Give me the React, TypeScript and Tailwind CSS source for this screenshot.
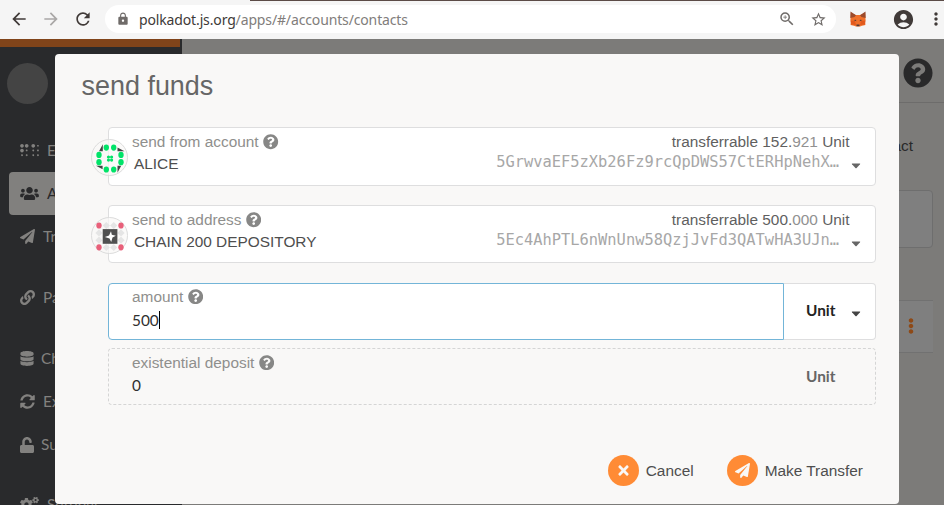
import type { ReactNode } from 'react';
import {
  FaBraille, FaUsers, FaPaperPlane, FaLink, FaDatabase, FaSyncAlt, FaUnlock, FaCogs,
  FaQuestionCircle, FaTimes, FaEllipsisV,
} from 'react-icons/fa';
import {
  MdArrowBack, MdArrowForward, MdRefresh, MdLock, MdZoomIn, MdStarBorder, MdAccountCircle, MdMoreVert,
} from 'react-icons/md';

function Fox() {
  return (
    <svg viewBox="0 0 18 16" className="h-4 w-[18px]">
      <path fill="#f0702a" d="M2 2 6.800 4h4.400L16 2l.6 7-.6 2 .4 3-3.400.800-2 .800H7l-2-.800-3.400-.800.400-3-.600-2z" />
      <path fill="#9c4a2b" d="M1.500.5 7 4.200 5.500 6 1.300 7zM16.500.5 11 4.200 12.500 6l4.200 1z" />
      <path fill="#e2591c" d="M1.500 9.500 6 10l1 4-5-.5zM16.500 9.500 12 10l-1 4 5-.5z" />
      <path fill="#543a34" d="m4.500 9 2.500-.3.300 1.600zM13.500 9l-2.500-.3-.3 1.600zM7.500 13.500h3v1.800h-3z" />
    </svg>
  );
}

function BrowserBar() {
  return (
    <header className="relative flex h-[39px] shrink-0 items-center bg-[#f5f5f5] pb-px">
      <div className="absolute top-0 right-0 h-px w-[694px] bg-[#5b4b47]" />
      <MdArrowBack className="ml-[9px] h-5 w-5 shrink-0 text-[#403a38]" />
      <MdArrowForward className="ml-3 h-5 w-5 shrink-0 text-[#a9a7a6]" />
      <MdRefresh className="ml-3 h-5 w-5 shrink-0 text-[#403a38]" />
      <div className="ml-3 flex h-7 w-[731px] shrink-0 items-center rounded-full bg-white">
        <MdLock className="ml-[11px] h-[14px] w-[14px] shrink-0 text-[#6f6b69]" />
        <span className="ml-[9px] grow font-['Noto_Sans',sans-serif] text-[14px] tracking-[-0.14px] text-[#817d7b]">
          <span className="text-[#403a38]">polkadot.js.org</span>/apps/#/accounts/contacts
        </span>
        <MdZoomIn className="mr-[14px] h-[18px] w-[18px] shrink-0 text-[#6f6b69]" />
        <MdStarBorder className="mr-[9px] h-[17px] w-[17px] shrink-0 text-[#6f6b69]" />
      </div>
      <div className="ml-[13px]"><Fox /></div>
      <MdAccountCircle className="ml-[25px] h-[23px] w-[23px] shrink-0 text-[#403a38]" />
      <MdMoreVert className="ml-[11px] h-5 w-5 shrink-0 text-[#403a38]" />
    </header>
  );
}

function NavItem({ icon, children, className = '' }: { icon: ReactNode; children: ReactNode; className?: string }) {
  return (
    <div className={`ml-[9px] flex h-[43px] w-[173px] shrink-0 items-center rounded-[4px] pl-[11px] font-[Lato,sans-serif] text-[15.4px] whitespace-nowrap ${className}`}>
      {icon}
      <span>{children}</span>
    </div>
  );
}

function Sidebar() {
  return (
    <aside className="flex w-[182px] shrink-0 flex-col overflow-hidden bg-[#292a2c] text-[#82817f]">
      <div className="h-2 w-[180px] shrink-0 bg-[#80441a]" />
      <div className="mt-4 mb-[25px] ml-[7px] h-[41px] w-[41px] shrink-0 rounded-full bg-[#444]" />
      <NavItem icon={<FaBraille className="mr-[8px] h-[15px] w-[19px]" />}>Explorer</NavItem>
      <NavItem className="bg-[#81807e] text-[#29292b]" icon={<FaUsers className="mr-[8px] h-[15px] w-[19px]" />}>Accounts</NavItem>
      <NavItem icon={<FaPaperPlane className="mr-[8px] h-[15px] w-[15px]" />}>Transfer</NavItem>
      <NavItem className="mt-[18px]" icon={<FaLink className="mr-[8px] h-[15px] w-[15px]" />}>Parachains</NavItem>
      <NavItem className="mt-[18px]" icon={<FaDatabase className="mr-[7px] h-[15px] w-[14px]" />}>Chain state</NavItem>
      <NavItem icon={<FaSyncAlt className="mr-[8px] h-[15px] w-[15px]" />}>Extrinsics</NavItem>
      <NavItem icon={<FaUnlock className="mr-[7px] h-4 w-[14px]" />}>Sudo</NavItem>
      <NavItem className="mt-[17px]" icon={<FaCogs className="mr-[8px] h-[15px] w-[19px]" />}>Settings</NavItem>
    </aside>
  );
}

function PageContent() {
  return (
    <main className="flex grow flex-col items-end bg-[#7c7b79] font-['Liberation_Sans',sans-serif]">
      <div className="flex h-16 w-full justify-end border-b border-[#6d6c6b] pt-[19px] pr-[11px]">
        <FaQuestionCircle className="h-[30px] w-[30px] text-[#29292a]" />
      </div>
      <div className="mt-[33px] mr-[31px] text-[15.4px] leading-5 text-[#29292a]">Add contact</div>
      <div className="mt-[34px] mr-[11px] h-[58px] w-[730px] rounded-[4px] border border-[#6e6e6e] bg-[#7f7f7f]" />
      <div className="mt-[52px] mr-[11px] flex h-[53px] w-[730px] items-center justify-end border-y border-[#717171] bg-[#7f7f7f] pr-[14px]">
        <FaEllipsisV className="mb-[2px] h-[16px] w-[16px] text-[#8e4916]" />
      </div>
    </main>
  );
}

const corners: [number, number][] = [[7, 7.500], [29, 7.500], [7, 29.300], [29, 29.300]];
const edges: [number, number][] = [[14.300, 7.600], [21.700, 7.600], [7, 14.900], [29, 14.900], [7, 22.200], [29, 22.200], [14.300, 29.500], [21.700, 29.500]];

function AliceIcon() {
  return (
    <svg viewBox="0 0 37 37" className="h-[37px] w-[37px]">
      <g fill="#444">
        <path d="M7 11.300 10.800 4.200V11.300zM25.500 7.600l7 3.700h-7zM4 25.700H10.600v3.600zM25.500 25.700H29.200l-3.700 7z" />
      </g>
      <g fill="#00e368">
        {edges.map(([x, y], i) => <ellipse key={i} cx={x} cy={y} rx="2.7" ry="3.1" />)}
        <circle cx="16.500" cy="17" r="1.600" /><circle cx="19.600" cy="17" r="1.600" />
        <circle cx="16.500" cy="20.100" r="1.600" /><circle cx="19.600" cy="20.100" r="1.600" />
      </g>
    </svg>
  );
}

function DepositoryIcon() {
  return (
    <svg viewBox="0 0 37 37" className="h-[37px] w-[37px]">
      {edges.map(([x, y], i) => <path key={i} d={`M${x} ${y - 3.6}l3.600 3.600-3.600 3.600-3.600-3.600z`} fill="#e5e5e5" />)}
      {corners.map(([x, y], i) => <ellipse key={i} cx={x} cy={y} rx="2.700" ry="3.100" fill="#e8607a" />)}
      <path fill="#505050" d="M10.700 11.100H25.400v14.700H10.700z" />
      <path fill="#fff" d="M19 13.200l.8 3.500 4 1.100-3.300 1.700-1.300 4.400-1.700-3.500-4.600-1.300 4.100-1.700z" />
    </svg>
  );
}

function Caret({ className }: { className: string }) {
  return (
    <svg viewBox="0 0 10 6" className={`h-[6px] w-[10px] shrink-0 ${className}`}>
      <path fill="currentColor" d="M1.300.500h7.400q.900 0 .300.700L5.600 4.900q-.6.600-1.200 0L1 1.200Q.400.500 1.300.500z" />
    </svg>
  );
}

function Label({ children }: { children: ReactNode }) {
  return (
    <div className="flex items-center gap-[4.500px] text-[15.4px] leading-5 text-[#8f8f8d]">
      {children}
      <FaQuestionCircle className="h-[15.4px] w-[15.4px] text-[#878786]" />
    </div>
  );
}

interface AccountProps { label: string; name: string; whole: string; fraction: string; address: string; icon: ReactNode; className: string }

function AccountField({ label, name, whole, fraction, address, icon, className }: AccountProps) {
  return (
    <section className={`relative flex justify-between rounded-[4px] border border-[#dededf] bg-white pt-1 pr-[14px] pl-[23px] ${className}`}>
      <div className="absolute top-[11px] -left-[18px] h-[37px] w-[37px] rounded-full border border-[#dcdcdc] bg-[#f9f8f7]/70">
        <div className="-mt-[0.5px] -ml-[0.5px]">{icon}</div>
      </div>
      <div>
        <Label>{label}</Label>
        <div className="mt-[2px] ml-[2px] text-[15.4px] leading-5 text-[#4e4e4e]">{name}</div>
      </div>
      <div>
        <div className="pr-[11.500px] text-right text-[15.4px] leading-5 tracking-[-0.01px] text-[#5f5f5f]">
          transferrable {whole}.<span className="text-[#919191]">{fraction}</span> Unit
        </div>
        <div className="mt-px flex items-center gap-3">
          <span className="font-['DejaVu_Sans_Mono',monospace] text-[15.4px] leading-[18px] text-[#a7a7a7]">{address}</span>
          <Caret className="mt-2 text-[#666]" />
        </div>
      </div>
    </section>
  );
}

function Action({ icon, children }: { icon: ReactNode; children: ReactNode }) {
  return (
    <button className="flex items-center gap-[6.500px] text-[15.4px] text-[#4e4e4e]">
      <span className="flex h-[31px] w-[31px] items-center justify-center rounded-full bg-[#ff8b35] text-[#f9f8f7]">{icon}</span>
      {children}
    </button>
  );
}

function TransferModal() {
  return (
    <div className="absolute top-[54px] left-[55px] flex h-[450px] w-[844px] flex-col rounded-[4px] bg-[#f9f8f7] font-['Liberation_Sans',sans-serif]">
      <h1 className="mt-4 ml-[26.500px] h-[57px] text-[26.950px] leading-8 text-[#666]">send funds</h1>
      <div className="mr-[23px] ml-[53px] flex flex-col">
        <AccountField className="h-[59px]" label="send from account" name="ALICE" whole="152" fraction="921" address="5GrwvaEF5zXb26Fz9rcQpDWS57CtERHpNehX…" icon={<AliceIcon />} />
        <AccountField className="mt-[19px] h-[58px]" label="send to address" name="CHAIN 200 DEPOSITORY" whole="500" fraction="000" address="5Ec4AhPTL6nWnUnw58QzjJvFd3QATwHA3UJn…" icon={<DepositoryIcon />} />
        <section className="mt-5 flex h-[57px]">
          <div className="w-[676px] rounded-l-[4px] border border-[#73b5d8] bg-white pt-[2.500px] pl-[23px]">
            <Label>amount</Label>
            <div className="mt-[3px] flex items-center font-[Lato,sans-serif] text-[15.4px] leading-5 text-[#303030]">
              500<span className="h-[18px] w-px bg-black" />
            </div>
          </div>
          <div className="flex grow items-center rounded-r-[4px] border border-l-0 border-[#dededf] bg-white pl-[22px] font-[Lato,sans-serif] text-[15.4px] font-bold text-[#232323]">
            <span className="-mt-[2px]">Unit</span>
            <Caret className="mt-[5px] ml-[15px] text-[#444]" />
          </div>
        </section>
        <section className="mt-2 flex h-[57px] justify-between rounded-[4px] border border-dashed border-[#d5d5d5] pt-[3.500px] pr-[39.500px] pl-[23px]">
          <div>
            <Label>existential deposit</Label>
            <div className="mt-[2px] font-[Lato,sans-serif] text-[15.4px] leading-5 text-[#303030]">0</div>
          </div>
          <span className="mt-[13px] font-[Lato,sans-serif] text-[15.4px] leading-5 font-bold text-[#666]">Unit</span>
        </section>
      </div>
      <footer className="mt-[50px] mr-9 flex justify-end gap-[33.500px]">
        <Action icon={<FaTimes className="h-[15px] w-[15px]" />}>Cancel</Action>
        <Action icon={<FaPaperPlane className="h-[15px] w-[15px]" />}>Make Transfer</Action>
      </footer>
    </div>
  );
}

export default function App() {
  return (
    <div className="relative flex h-[505px] w-[944px] flex-col overflow-hidden">
      <BrowserBar />
      <div className="flex min-h-0 grow">
        <Sidebar />
        <PageContent />
      </div>
      <TransferModal />
    </div>
  );
}
